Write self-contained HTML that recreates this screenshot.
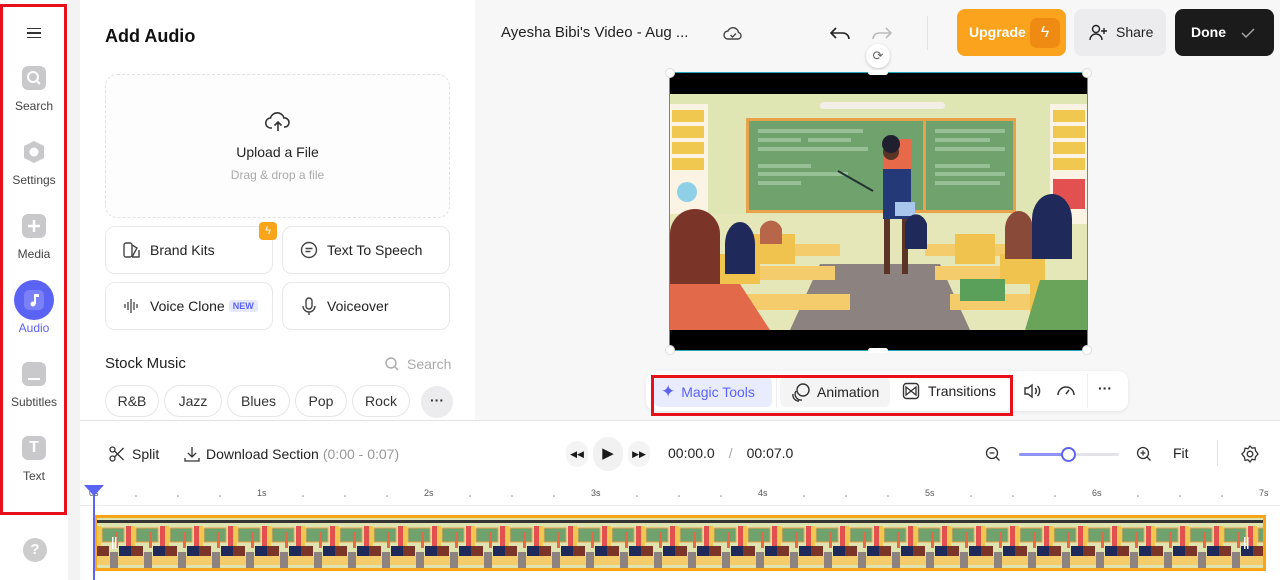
<!DOCTYPE html>
<html><head><meta charset="utf-8"><style>
*{box-sizing:border-box;margin:0;padding:0}
body{width:1280px;height:580px;overflow:hidden;font-family:"Liberation Sans",sans-serif;background:#f7f7f8;position:relative;color:#1a1a1a}
.abs{position:absolute}
.side{left:0;top:0;width:68px;height:580px;background:#fff}
.strip{left:68px;top:0;width:12px;height:580px;background:#f3f3f4}
.redbox{border:3px solid #e8101a}
.nav{position:absolute;left:0;width:68px;text-align:center;font-size:12px;color:#444}
.nav .ic{width:24px;height:24px;border-radius:6px;background:#c9c9cc;margin:0 auto 9px;position:relative}
.panel{left:80px;top:0;width:395px;height:420px;background:#fff}
.card{position:absolute;background:#fff;border:1px solid #e8e8ea;border-radius:10px;font-size:14px;display:flex;align-items:center;color:#222}
.chip{position:absolute;top:385px;height:32px;border:1px solid #e6e6e8;border-radius:16px;font-size:14px;color:#333;display:flex;align-items:center;justify-content:center}
.tl{left:80px;top:420px;width:1200px;height:160px;background:#fff;border-top:1px solid #e4e4e6}
.tb{position:absolute;font-size:14px;color:#222;display:flex;align-items:center}
</style></head><body>
<div class="abs side"></div>
<div class="abs strip"></div>
<div class="abs panel"></div>
<div class="abs tl"></div>

<!-- sidebar -->
<div class="abs" style="left:27px;top:28px;width:14px;height:10px;border-top:1.6px solid #333;border-bottom:1.6px solid #333"></div>
<div class="abs" style="left:27px;top:32px;width:14px;height:1.6px;background:#333"></div>
<div class="nav" style="top:66px"><div class="ic"><svg width="24" height="24"><circle cx="11" cy="11" r="5" fill="none" stroke="#fff" stroke-width="2"/><path d="M15 15l3 3" stroke="#fff" stroke-width="2"/></svg></div>Search</div>
<div class="nav" style="top:140px"><div class="ic" style="background:none"><svg width="24" height="24"><polygon points="12,1 22,6 22,18 12,23 2,18 2,6" fill="#c9c9cc"/><circle cx="12" cy="12" r="4.5" fill="#fff"/></svg></div>Settings</div>
<div class="nav" style="top:214px"><div class="ic"><svg width="24" height="24"><path d="M12 6v12M6 12h12" stroke="#fff" stroke-width="2.5"/></svg></div>Media</div>
<div class="abs" style="left:14px;top:280px;width:40px;height:40px;border-radius:50%;background:#5b63f5"></div>
<div class="abs" style="left:24px;top:290px;width:20px;height:20px;border-radius:5px;background:#7a80f8"></div>
<svg class="abs" style="left:24px;top:290px" width="20" height="20"><path d="M11 4v10" stroke="#fff" stroke-width="2"/><circle cx="9" cy="14" r="2.5" fill="#fff"/><path d="M11 4h4v3h-4" fill="#fff"/></svg>
<div class="nav" style="top:321px;color:#5b63f5;font-size:12px">Audio</div>
<div class="nav" style="top:362px"><div class="ic"><div style="position:absolute;left:6px;bottom:6px;width:12px;height:2px;background:#fff"></div></div>Subtitles</div>
<div class="nav" style="top:436px"><div class="ic" style="color:#fff;font-weight:bold;font-size:16px;line-height:24px">T</div>Text</div>
<div class="abs" style="left:23px;top:538px;width:24px;height:24px;border-radius:50%;background:#ccc;color:#fff;font-weight:bold;font-size:15px;text-align:center;line-height:24px">?</div>
<div class="abs redbox" style="left:0;top:4px;width:67px;height:511px"></div>

<!-- panel -->
<div class="abs" style="left:105px;top:26px;font-size:18px;font-weight:bold;color:#111">Add Audio</div>
<div class="abs" style="left:105px;top:74px;width:345px;height:144px;border:1px dashed #e2e2e4;border-radius:12px;background:#fdfdfd;text-align:center">
 <svg style="margin-top:36px" width="26" height="22" viewBox="0 0 26 22"><path d="M7 17H6a5 5 0 0 1-.5-10A7 7 0 0 1 19 7a4.5 4.5 0 0 1 1 9h-1" fill="none" stroke="#333" stroke-width="1.6"/><path d="M13 20V11M9.5 14.5L13 11l3.5 3.5" fill="none" stroke="#333" stroke-width="1.6"/></svg>
 <div style="font-size:14px;color:#222;margin-top:6px">Upload a File</div>
 <div style="font-size:12px;color:#aaa;margin-top:8px">Drag &amp; drop a file</div>
</div>
<div class="card" style="left:105px;top:226px;width:168px;height:48px;padding-left:16px"><svg width="20" height="20" style="margin-right:8px"><rect x="2" y="3" width="8" height="14" rx="2" fill="none" stroke="#444" stroke-width="1.4"/><path d="M10 5l5 3-5 9M10 17h7V10" fill="none" stroke="#444" stroke-width="1.4"/></svg>Brand Kits</div>
<div class="abs" style="left:259px;top:222px;width:18px;height:18px;border-radius:4px;background:#f8a51b;color:#fff;font-size:11px;text-align:center;line-height:18px">ϟ</div>
<div class="card" style="left:282px;top:226px;width:168px;height:48px;padding-left:16px"><svg width="20" height="20" style="margin-right:8px"><circle cx="10" cy="10" r="7.5" fill="none" stroke="#444" stroke-width="1.4"/><path d="M6.5 8.5h7M6.5 11.5h5" stroke="#444" stroke-width="1.4"/></svg>Text To Speech</div>
<div class="card" style="left:105px;top:282px;width:168px;height:48px;padding-left:16px"><svg width="20" height="20" style="margin-right:8px"><path d="M3 8v4M6 6v8M9 3v14M12 6v8M15 8v4" stroke="#444" stroke-width="1.3"/></svg>Voice Clone<span style="margin-left:4px;background:#e6e8ff;color:#5b63f5;font-size:9px;font-weight:bold;padding:1px 4px;border-radius:3px">NEW</span></div>
<div class="card" style="left:282px;top:282px;width:168px;height:48px;padding-left:16px"><svg width="20" height="20" style="margin-right:8px"><rect x="7" y="2" width="6" height="11" rx="3" fill="none" stroke="#444" stroke-width="1.4"/><path d="M4 10a6 6 0 0 0 12 0M10 16v3" fill="none" stroke="#444" stroke-width="1.4"/></svg>Voiceover</div>
<div class="abs" style="left:105px;top:355px;font-size:15px;color:#222">Stock Music</div>
<svg class="abs" style="left:384px;top:356px" width="16" height="16"><circle cx="7" cy="7" r="5" fill="none" stroke="#aaa" stroke-width="1.4"/><path d="M11 11l3 3" stroke="#aaa" stroke-width="1.4"/></svg>
<div class="abs" style="left:407px;top:356px;font-size:14px;color:#aaa">Search</div>
<div class="chip" style="left:105px;width:54px">R&amp;B</div>
<div class="chip" style="left:164px;width:58px">Jazz</div>
<div class="chip" style="left:227px;width:63px">Blues</div>
<div class="chip" style="left:295px;width:52px">Pop</div>
<div class="chip" style="left:352px;width:58px">Rock</div>
<div class="abs" style="left:421px;top:386px;width:32px;height:32px;border-radius:50%;background:#ececee;text-align:center;font-size:14px;line-height:28px;color:#333;font-weight:bold">···</div>

<!-- top bar -->
<div class="abs" style="left:501px;top:24px;font-size:15px;color:#222">Ayesha Bibi's Video - Aug ...</div>
<svg class="abs" style="left:723px;top:24px" width="20" height="18"><path d="M5 15a4 4 0 0 1 0-8 5.5 5.5 0 0 1 10.5 1.5A3.3 3.3 0 0 1 15 15z" fill="none" stroke="#444" stroke-width="1.4"/><path d="M7.5 11l2 2 3.5-3.5" fill="none" stroke="#444" stroke-width="1.4"/></svg>
<svg class="abs" style="left:828px;top:24px" width="24" height="18"><path d="M8 4L3 9l5 5M3 9h12a6 6 0 0 1 6 6" fill="none" stroke="#222" stroke-width="1.6"/></svg>
<svg class="abs" style="left:870px;top:24px" width="24" height="18"><path d="M16 4l5 5-5 5M21 9H9a6 6 0 0 0-6 6" fill="none" stroke="#bbb" stroke-width="1.6"/></svg>
<div class="abs" style="left:927px;top:16px;width:1px;height:34px;background:#e2e2e4"></div>
<div class="abs" style="left:957px;top:9px;width:109px;height:47px;border-radius:8px;background:#fba31d;color:#fff;font-weight:bold;font-size:14px;line-height:47px;padding-left:12px">Upgrade</div>
<div class="abs" style="left:1030px;top:18px;width:30px;height:30px;border-radius:7px;background:#ef8b12;color:#fff;text-align:center;line-height:30px;font-size:16px">ϟ</div>
<div class="abs" style="left:1074px;top:9px;width:92px;height:47px;border-radius:8px;background:#ececef;font-size:14px;line-height:47px;padding-left:42px;color:#222">Share</div>
<svg class="abs" style="left:1088px;top:23px" width="22" height="20"><circle cx="8" cy="6" r="3.5" fill="none" stroke="#222" stroke-width="1.4"/><path d="M2 17a6 6 0 0 1 12 0M16 5v6M13 8h6" fill="none" stroke="#222" stroke-width="1.4"/></svg>
<div class="abs" style="left:1175px;top:9px;width:99px;height:47px;border-radius:8px;background:#1b1b1c;color:#fff;font-weight:bold;font-size:14px;line-height:47px;padding-left:16px">Done</div>
<svg class="abs" style="left:1240px;top:26px" width="16" height="14"><path d="M2 7l4 4 8-8" fill="none" stroke="#aaa" stroke-width="1.4"/></svg>

<!-- video -->
<div class="abs" style="left:866px;top:44px;width:24px;height:24px;border-radius:50%;background:#fff;box-shadow:0 1px 3px rgba(0,0,0,.2);text-align:center;line-height:24px;font-size:13px;color:#666">⟳</div>
<div class="abs" style="left:669px;top:72px;width:419px;height:279px;border:1px solid #27a6b8;background:#000"></div>
<svg class="abs" style="left:670px;top:94px" width="417" height="236" viewBox="0 0 417 236">
<rect width="417" height="236" fill="#dfe6b4"/>
<rect x="0" y="120" width="417" height="116" fill="#e6e7b8"/>
<path d="M150 170L270 170L300 236L120 236Z" fill="#8c8380"/>
<rect x="150" y="8" width="125" height="7" rx="3.5" fill="#f4eee8"/>
<rect x="76" y="24" width="180" height="95" fill="#e8a24a"/>
<rect x="79" y="27" width="174" height="89" fill="#6fa26d"/>
<rect x="253" y="24" width="93" height="95" fill="#e8a24a"/>
<rect x="256" y="27" width="87" height="89" fill="#6fa26d"/>
<g fill="#97c096"><rect x="88" y="35" width="105" height="4"/><rect x="88" y="44" width="43" height="4"/><rect x="138" y="44" width="43" height="4"/><rect x="88" y="53" width="110" height="4"/><rect x="88" y="70" width="53" height="4"/><rect x="88" y="78" width="90" height="4"/><rect x="88" y="87" width="43" height="4"/><rect x="265" y="35" width="70" height="4"/><rect x="265" y="44" width="55" height="4"/><rect x="265" y="53" width="70" height="4"/><rect x="265" y="70" width="55" height="4"/><rect x="265" y="78" width="70" height="4"/><rect x="265" y="87" width="65" height="4"/></g>
<rect x="0" y="10" width="38" height="110" fill="#fbf3e4"/>
<g fill="#f0c850"><rect x="2" y="16" width="32" height="12"/><rect x="2" y="32" width="32" height="12"/><rect x="2" y="48" width="32" height="12"/><rect x="2" y="64" width="32" height="12"/></g>
<circle cx="17" cy="98" r="10" fill="#8ed1e6"/>
<rect x="380" y="10" width="37" height="120" fill="#fbf3e4"/>
<g fill="#f0c850"><rect x="383" y="16" width="32" height="12"/><rect x="383" y="32" width="32" height="12"/><rect x="383" y="48" width="32" height="12"/><rect x="383" y="64" width="32" height="12"/></g>
<rect x="383" y="85" width="32" height="30" fill="#e2514f"/>
<path d="M213 75h28v50h-28z" fill="#243a78"/>
<path d="M213 45h28v30h-28z" fill="#e66a4a"/>
<circle cx="221" cy="58" r="8" fill="#5a3424"/>
<circle cx="221" cy="50" r="9" fill="#1f1f2f"/>
<path d="M217 125v55M235 125v55" stroke="#5a3424" stroke-width="6"/>
<path d="M168 77l35 20" stroke="#233" stroke-width="2"/>
<rect x="225" y="108" width="20" height="14" fill="#a9c7ec"/>
<g fill="#f4cc6c"><rect x="90" y="150" width="80" height="12"/><rect x="255" y="150" width="85" height="12"/><rect x="70" y="172" width="95" height="14"/><rect x="265" y="172" width="95" height="14"/><rect x="40" y="200" width="140" height="16"/><rect x="280" y="200" width="137" height="16"/></g>
<g fill="#f0c24e"><rect x="80" y="140" width="45" height="30"/><rect x="285" y="140" width="40" height="30"/><rect x="45" y="160" width="45" height="30"/><rect x="330" y="160" width="45" height="30"/><rect x="0" y="190" width="60" height="46"/><rect x="360" y="190" width="57" height="46"/></g>
<path d="M0 140a25 25 0 0 1 50 0v96H0z" fill="#7a3428"/>
<path d="M55 150a15 22 0 0 1 30 0v30H55z" fill="#1f2a5a"/>
<path d="M90 135a12 14 0 0 1 22 0v15H90z" fill="#b7664a"/>
<path d="M235 130a12 16 0 0 1 22 0v25h-22z" fill="#1f2a5a"/>
<path d="M335 135a14 18 0 0 1 28 0v30h-28z" fill="#8a4a3a"/>
<path d="M362 125a20 25 0 0 1 40 0v40h-40z" fill="#1f2a5a"/>
<path d="M355 236l15-50h47v50z" fill="#6aa45a"/>
<path d="M0 236v-46h70l30 46z" fill="#e26a4a"/>
<rect x="290" y="185" width="45" height="22" fill="#5aa05a"/>
</svg>
<div class="abs" style="left:665px;top:68px;width:10px;height:10px;border-radius:50%;background:#fff;border:1px solid #ddd"></div>
<div class="abs" style="left:1082px;top:68px;width:10px;height:10px;border-radius:50%;background:#fff;border:1px solid #ddd"></div>
<div class="abs" style="left:665px;top:345px;width:10px;height:10px;border-radius:50%;background:#fff;border:1px solid #ddd"></div>
<div class="abs" style="left:1082px;top:345px;width:10px;height:10px;border-radius:50%;background:#fff;border:1px solid #ddd"></div>
<div class="abs" style="left:868px;top:70px;width:20px;height:5px;border-radius:3px;background:#fff"></div>
<div class="abs" style="left:868px;top:348px;width:20px;height:5px;border-radius:3px;background:#fff"></div>

<!-- toolbar -->
<div class="abs" style="left:646px;top:371px;width:482px;height:40px;border-radius:10px;background:#fff;box-shadow:0 1px 4px rgba(0,0,0,.08)"></div>
<div class="abs" style="left:654px;top:377px;width:118px;height:30px;border-radius:6px;background:#e9ebff"></div>
<div class="abs" style="left:780px;top:377px;width:110px;height:30px;border-radius:6px;background:#f4f4f5"></div>
<div class="abs" style="left:776px;top:374px;width:1px;height:34px;background:#eee"></div>
<div class="abs" style="left:1087px;top:374px;width:1px;height:34px;background:#eee"></div>
<div class="tb" style="left:661px;top:382px;color:#5b63f5"><span style="font-size:17px;margin-right:6px">✦</span>Magic Tools</div>
<div class="tb" style="left:791px;top:382px"><svg width="20" height="20" style="margin-right:6px"><circle cx="12" cy="8" r="6" fill="none" stroke="#333" stroke-width="1.4"/><path d="M5 9a6 6 0 0 0 6 9M2 12a6 6 0 0 0 6 7" fill="none" stroke="#333" stroke-width="1.4"/></svg>Animation</div>
<div class="tb" style="left:902px;top:382px"><svg width="18" height="18" style="margin-right:8px"><rect x="1.5" y="1.5" width="15" height="15" rx="3" fill="none" stroke="#333" stroke-width="1.4"/><path d="M4 5l5 4-5 4zM14 5l-5 4 5 4z" fill="none" stroke="#333" stroke-width="1.3"/></svg>Transitions</div>
<svg class="abs" style="left:1022px;top:382px" width="20" height="18"><path d="M3 6h3l4-3v12l-4-3H3z" fill="none" stroke="#333" stroke-width="1.4"/><path d="M13 6a4 4 0 0 1 0 6M15.5 4a7 7 0 0 1 0 10" fill="none" stroke="#333" stroke-width="1.4"/></svg>
<svg class="abs" style="left:1055px;top:382px" width="22" height="16"><path d="M3 13a8 8 0 0 1 16 0" fill="none" stroke="#333" stroke-width="1.5"/><path d="M11 12l3-4" stroke="#333" stroke-width="1.5"/></svg>
<div class="abs" style="left:1098px;top:380px;font-size:14px;font-weight:bold;color:#222">···</div>
<div class="abs redbox" style="left:651px;top:375px;width:362px;height:41px"></div>

<!-- timeline controls -->
<div class="tb" style="left:108px;top:445px"><svg width="18" height="18" style="margin-right:6px"><circle cx="4.5" cy="4.5" r="2.5" fill="none" stroke="#333" stroke-width="1.3"/><circle cx="4.5" cy="13.5" r="2.5" fill="none" stroke="#333" stroke-width="1.3"/><path d="M6.5 6l9 9M6.5 12l9-9" stroke="#333" stroke-width="1.3"/></svg>Split</div>
<div class="tb" style="left:183px;top:445px"><svg width="18" height="18" style="margin-right:5px"><path d="M9 2v10M5 8l4 4 4-4M2 13v3h14v-3" fill="none" stroke="#333" stroke-width="1.3"/></svg>Download Section<span style="color:#999;margin-left:4px">(0:00 - 0:07)</span></div>
<div class="abs" style="left:566px;top:441px;width:22px;height:26px;border-radius:11px;background:#f4f4f5;font-size:9px;text-align:center;line-height:26px">◀◀</div>
<div class="abs" style="left:593px;top:437px;width:30px;height:34px;border-radius:15px;background:#f1f1f2;font-size:15px;text-align:center;line-height:34px">▶</div>
<div class="abs" style="left:628px;top:441px;width:22px;height:26px;border-radius:11px;background:#f4f4f5;font-size:9px;text-align:center;line-height:26px">▶▶</div>
<div class="tb" style="left:668px;top:445px">00:00.0<span style="color:#aaa;margin:0 14px">/</span>00:07.0</div>
<svg class="abs" style="left:984px;top:445px" width="18" height="18"><circle cx="8" cy="8" r="5.5" fill="none" stroke="#333" stroke-width="1.3"/><path d="M5.5 8h5M12 12l3.5 3.5" stroke="#333" stroke-width="1.3"/></svg>
<div class="abs" style="left:1019px;top:453px;width:100px;height:3px;border-radius:2px;background:#e4e4e8"></div>
<div class="abs" style="left:1019px;top:453px;width:50px;height:3px;border-radius:2px;background:#8f95f7"></div>
<div class="abs" style="left:1061px;top:447px;width:15px;height:15px;border-radius:50%;background:#fff;border:2.5px solid #5b63f5"></div>
<svg class="abs" style="left:1135px;top:445px" width="18" height="18"><circle cx="8" cy="8" r="5.5" fill="none" stroke="#333" stroke-width="1.3"/><path d="M5.5 8h5M8 5.5v5M12 12l3.5 3.5" stroke="#333" stroke-width="1.3"/></svg>
<div class="tb" style="left:1173px;top:445px">Fit</div>
<div class="abs" style="left:1217px;top:440px;width:1px;height:26px;background:#e2e2e4"></div>
<svg class="abs" style="left:1240px;top:444px" width="20" height="20"><circle cx="10" cy="10" r="2.8" fill="none" stroke="#333" stroke-width="1.3"/><path d="M10 2l2 2.2 3-.5.5 3L18 10l-2.5 2.8-.5 3-3-.5L10 18l-2-2.2-3 .5-.5-3L2 10l2.5-2.8.5-3 3 .5z" fill="none" stroke="#333" stroke-width="1.3"/></svg>

<!-- ruler -->
<div class="abs" style="left:80px;top:505px;width:1200px;height:1px;background:#ececee"></div>
<div class="abs" style="left:0;top:488px;width:1280px;font-size:9px;color:#555">
<span style="position:absolute;left:89px">0s</span><span style="position:absolute;left:257px">1s</span><span style="position:absolute;left:424px">2s</span><span style="position:absolute;left:591px">3s</span><span style="position:absolute;left:758px">4s</span><span style="position:absolute;left:925px">5s</span><span style="position:absolute;left:1092px">6s</span><span style="position:absolute;left:1259px">7s</span>
</div>
<svg class="abs" style="left:80px;top:490px" width="1200" height="10"><g fill="#888">
<circle cx="56" cy="6" r=".8"/><circle cx="98" cy="6" r=".8"/><circle cx="140" cy="6" r=".8"/><circle cx="223" cy="6" r=".8"/><circle cx="265" cy="6" r=".8"/><circle cx="307" cy="6" r=".8"/><circle cx="390" cy="6" r=".8"/><circle cx="432" cy="6" r=".8"/><circle cx="474" cy="6" r=".8"/><circle cx="557" cy="6" r=".8"/><circle cx="599" cy="6" r=".8"/><circle cx="641" cy="6" r=".8"/><circle cx="724" cy="6" r=".8"/><circle cx="766" cy="6" r=".8"/><circle cx="808" cy="6" r=".8"/><circle cx="891" cy="6" r=".8"/><circle cx="933" cy="6" r=".8"/><circle cx="975" cy="6" r=".8"/><circle cx="1058" cy="6" r=".8"/><circle cx="1100" cy="6" r=".8"/><circle cx="1142" cy="6" r=".8"/></g></svg>

<!-- clip -->
<svg class="abs" style="left:94px;top:515px" width="1172" height="56">
<defs><pattern id="p" width="34" height="50" patternUnits="userSpaceOnUse" x="3" y="3">
<rect width="34" height="50" fill="#dfe3b0"/>
<rect x="0" y="2" width="34" height="3" fill="#333"/>
<rect x="5" y="10" width="22" height="14" fill="#6fa26d" stroke="#e8a24a"/>
<rect x="0" y="8" width="4" height="20" fill="#f0c850"/>
<rect x="29" y="8" width="5" height="20" fill="#e2514f"/>
<rect x="18" y="14" width="3" height="16" fill="#e66a4a"/>
<rect x="0" y="28" width="12" height="14" fill="#7a3428"/>
<rect x="22" y="28" width="12" height="14" fill="#1f2a5a"/>
<rect x="0" y="38" width="34" height="9" fill="#f4cc6c"/>
<rect x="13" y="34" width="8" height="16" fill="#8c8380"/>
</pattern></defs>
<rect x="1.5" y="1.5" width="1169" height="53" fill="url(#p)" stroke="#f8a51b" stroke-width="3"/>
<rect x="18" y="22" width="1.5" height="12" fill="#fff"/><rect x="21" y="22" width="1.5" height="12" fill="#fff"/>
<rect x="1150" y="22" width="1.5" height="12" fill="#fff"/><rect x="1153" y="22" width="1.5" height="12" fill="#fff"/>
</svg>
<div class="abs" style="left:93px;top:495px;width:1.5px;height:85px;background:#5b63f5"></div>
<svg class="abs" style="left:84px;top:485px" width="20" height="12"><path d="M0 0h20l-10 11z" fill="#5b63f5"/></svg>
</body></html>
